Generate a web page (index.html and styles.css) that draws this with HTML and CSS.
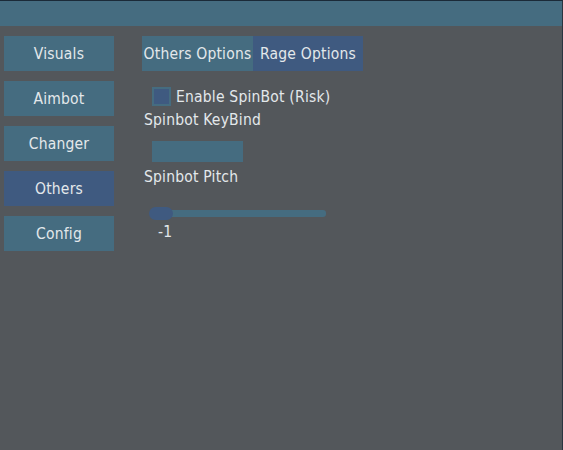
FILE: index.html
```html
<!DOCTYPE html>
<html>
<head>
<meta charset="utf-8">
<link rel="stylesheet" href="styles.css">
</head>
<body>
<div class="window">
  <div class="titlebar"></div>
  <div class="content">
    <nav class="sidebar">
      <div class="navbtn">Visuals</div>
      <div class="navbtn">Aimbot</div>
      <div class="navbtn">Changer</div>
      <div class="navbtn active">Others</div>
      <div class="navbtn">Config</div>
    </nav>
    <main class="main">
      <div class="tabs">
        <div class="tab">Others Options</div>
        <div class="tab active">Rage Options</div>
      </div>
      <div class="checkrow">
        <span class="checkbox"><span class="checkinner"></span></span>
        <span class="label">Enable SpinBot (Risk)</span>
      </div>
      <div class="label field-label">Spinbot KeyBind</div>
      <div class="keybind"></div>
      <div class="label field-label pitch">Spinbot Pitch</div>
      <div class="slider">
        <div class="track"></div>
        <div class="grab"></div>
      </div>
      <div class="label value">-1</div>
    </main>
  </div>
</div>
</body>
</html>
```
FILE: styles.css
```css
html, body {
  margin: 0;
  padding: 0;
  background: #53575b;
}
.window {
  width: 563px;
  height: 450px;
  box-sizing: border-box;
  border-top: 1px solid #1b2a38;
  border-right: 1px solid #2a3540;
  background: #53575b;
  font-family: "DejaVu Sans Condensed", "DejaVu Sans", sans-serif;
  font-size: 15.5px;
  letter-spacing: 0.2px;
  color: #e3e8eb;
  overflow: hidden;
}
.titlebar {
  height: 25px;
  background: #456c80;
}
.content {
  display: flex;
  padding-top: 10px;
}
.sidebar {
  display: flex;
  flex-direction: column;
  gap: 10px;
  padding-left: 4px;
  width: 110px;
}
.navbtn {
  height: 35px;
  background: #456c80;
  display: flex;
  align-items: center;
  justify-content: center;
}
.navbtn.active {
  background: #3f5a80;
}
.main {
  margin-left: 28px;
  display: flex;
  flex-direction: column;
  align-items: flex-start;
}
.tabs {
  display: flex;
  height: 35px;
}
.tab {
  width: 111px;
  display: flex;
  align-items: center;
  justify-content: center;
  background: #456c80;
}
.tab.active {
  width: 110px;
  background: #3f5a80;
}
.checkrow {
  display: flex;
  align-items: center;
  margin-top: 16px;
  margin-left: 10px;
  gap: 5px;
  height: 19px;
}
.checkbox {
  width: 19px;
  height: 19px;
  box-sizing: border-box;
  background: #456c80;
  padding: 2px;
  display: flex;
}
.checkinner {
  flex: 1;
  background: #3f5a80;
}
.label {
  line-height: 18px;
}
.field-label {
  margin-left: 2px;
  margin-top: 5px;
}
.keybind {
  width: 91px;
  height: 21px;
  margin-left: 10px;
  margin-top: 12px;
  background: #456c80;
}
.pitch {
  margin-top: 6px;
}
.slider {
  position: relative;
  width: 176px;
  height: 14px;
  margin-left: 8px;
  margin-top: 20px;
}
.track {
  position: absolute;
  left: 0;
  right: 0;
  top: 4px;
  height: 7px;
  border-radius: 3px;
  background: #456c80;
}
.grab {
  position: absolute;
  left: -1px;
  top: 1px;
  width: 24px;
  height: 13px;
  border-radius: 7px;
  background: #3f5a80;
}
.value {
  margin-left: 16px;
  margin-top: 3px;
}
```
